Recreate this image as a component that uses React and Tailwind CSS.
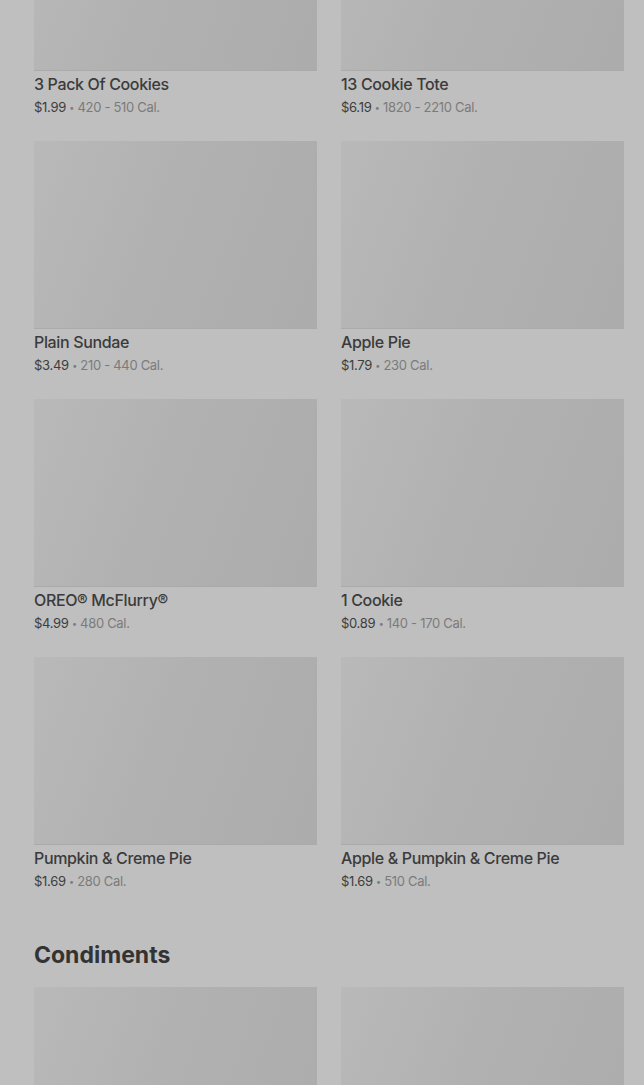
const ROWS = [
  [
    { name: '3 Pack Of Cookies', price: '$1.99', cal: '420 - 510 Cal.' },
    { name: '13 Cookie Tote', price: '$6.19', cal: '1820 - 2210 Cal.' },
  ],
  [
    { name: 'Plain Sundae', price: '$3.49', cal: '210 - 440 Cal.' },
    { name: 'Apple Pie', price: '$1.79', cal: '230 Cal.' },
  ],
  [
    { name: 'OREO® McFlurry®', price: '$4.99', cal: '480 Cal.' },
    { name: '1 Cookie', price: '$0.89', cal: '140 - 170 Cal.' },
  ],
  [
    { name: 'Pumpkin & Creme Pie', price: '$1.69', cal: '280 Cal.' },
    { name: 'Apple & Pumpkin & Creme Pie', price: '$1.69', cal: '510 Cal.' },
  ],
]

function Item({ item }) {
  return (
    <div>
      <div className="h-[188px] bg-[linear-gradient(110deg,#b9b9b9,#b1b1b1_45%,#acacac)] border-b border-[#aaaaaa]" />
      {item && (
        <>
          <div className="mt-[3px] text-[16px] leading-5 font-medium tracking-[-0.35px] text-[#3b3b3b]">{item.name}</div>
          <div className="mt-[4px] h-[18px] text-[13px] leading-[18px] tracking-[-0.3px]">
            <span className="text-[#3d3d3d]">{item.price}</span>
            <span className="text-[#7b7b7b]"> <span className="relative bottom-[1px] text-[9px] leading-none">•</span> {item.cal}</span>
          </div>
        </>
      )}
    </div>
  )
}

export default function App() {
  return (
    <div className="h-[1085px] overflow-hidden bg-[#bfbfbf] font-['Inter','Liberation_Sans',sans-serif]">
      <div className="pl-[34px] pr-[20px] -mt-[117px]">
        {/* Menu grid */}
        <div className="flex flex-col gap-[25px]">
          {ROWS.map((row, i) => (
            <div key={i} className="grid grid-cols-2 gap-x-[24px]">
              {row.map(it => <Item key={it.name} item={it} />)}
            </div>
          ))}
        </div>

        {/* Condiments */}
        <h2 className="mt-[51px] text-[23px] leading-7 font-bold text-[#333]">Condiments</h2>
        <div className="mt-[18px] grid grid-cols-2 gap-x-[24px]">
          <Item />
          <Item />
        </div>
      </div>
    </div>
  )
}
